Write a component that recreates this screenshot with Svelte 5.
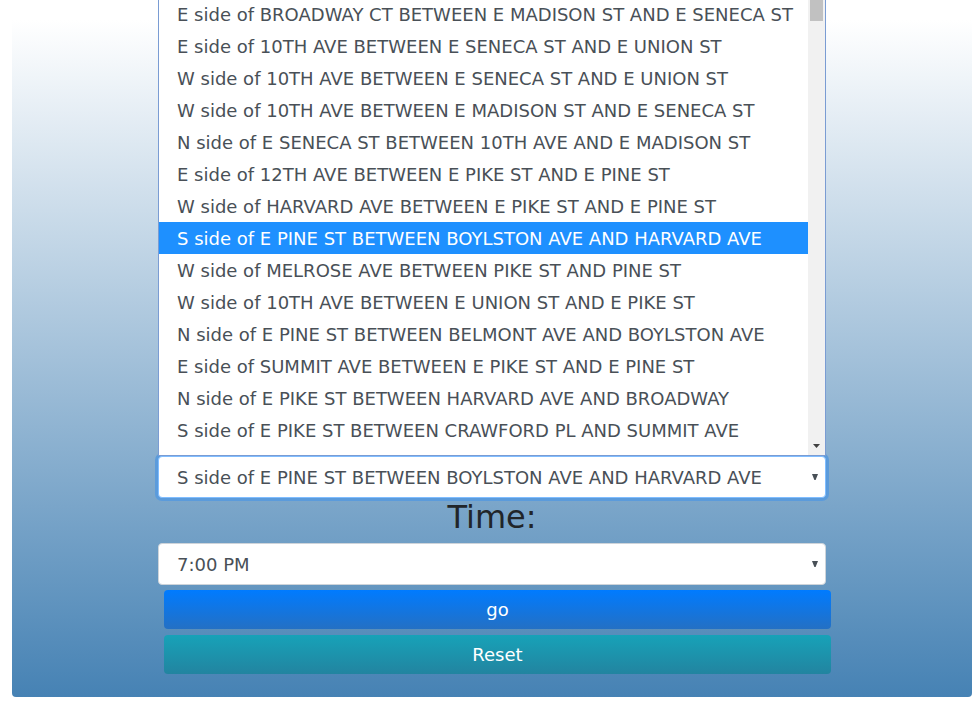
<script>
  const streets = [
    'E side of BROADWAY CT BETWEEN E MADISON ST AND E SENECA ST',
    'E side of 10TH AVE BETWEEN E SENECA ST AND E UNION ST',
    'W side of 10TH AVE BETWEEN E SENECA ST AND E UNION ST',
    'W side of 10TH AVE BETWEEN E MADISON ST AND E SENECA ST',
    'N side of E SENECA ST BETWEEN 10TH AVE AND E MADISON ST',
    'E side of 12TH AVE BETWEEN E PIKE ST AND E PINE ST',
    'W side of HARVARD AVE BETWEEN E PIKE ST AND E PINE ST',
    'S side of E PINE ST BETWEEN BOYLSTON AVE AND HARVARD AVE',
    'W side of MELROSE AVE BETWEEN PIKE ST AND PINE ST',
    'W side of 10TH AVE BETWEEN E UNION ST AND E PIKE ST',
    'N side of E PINE ST BETWEEN BELMONT AVE AND BOYLSTON AVE',
    'E side of SUMMIT AVE BETWEEN E PIKE ST AND E PINE ST',
    'N side of E PIKE ST BETWEEN HARVARD AVE AND BROADWAY',
    'S side of E PIKE ST BETWEEN CRAWFORD PL AND SUMMIT AVE'
  ];
  let street = $state(streets[7]);
  let time = $state('7:00 PM');

  function reset() {
    street = streets[7];
    time = '7:00 PM';
  }
</script>

<main>
  <form onsubmit={(e) => e.preventDefault()}>
    <div class="popup">
      <ul role="listbox" aria-label="Street">
        {#each streets as s}
          <li role="option" aria-selected={s === street} class:selected={s === street}>{s}</li>
        {/each}
      </ul>
      <div class="scrollbar" aria-hidden="true">
        <div class="thumb"></div>
        <svg width="7" height="4" viewBox="0 0 7 4"><path d="M0 0H7L3.5 4Z" fill="#404040" /></svg>
      </div>
    </div>

    <div class="field active">
      <select aria-label="Street" bind:value={street}>
        {#each streets as s}<option>{s}</option>{/each}
      </select>
      <svg width="6" height="6" viewBox="0 0 6 6"><path d="M0 0H6L3.6 6H2.4Z" fill="#495057" /></svg>
    </div>

    <label for="time">Time:</label>
    <div class="field">
      <select id="time" bind:value={time}>
        <option>6:00 PM</option>
        <option>7:00 PM</option>
        <option>8:00 PM</option>
      </select>
      <svg width="6" height="6" viewBox="0 0 6 6"><path d="M0 0H6L3.6 6H2.4Z" fill="#495057" /></svg>
    </div>

    <div class="actions">
      <button class="go" type="submit">go</button>
      <button class="reset" type="button" onclick={reset}>Reset</button>
    </div>
  </form>
</main>

<style>
  main {
    display: flow-root;
    margin: 0 8px 0 12px;
    padding: 0 146px 23px;
    border-radius: 4px;
    background: linear-gradient(#fff 20px, #4682b4);
    font-family: Verdana, 'DejaVu Sans', sans-serif;
    font-size: 18px;
    color: #495057;
  }
  form {
    display: flex;
    flex-direction: column;
  }
  .popup {
    display: flex;
    z-index: 1;
    margin-top: -2px;
    border: solid #7a9cd3;
    border-width: 0 1px 1px;
    background: #fff;
  }
  ul {
    flex: 1;
    min-width: 0;
    margin: 0;
    padding: 0 0 9px;
    list-style: none;
  }
  li {
    padding: 2px 0 0 18px;
    line-height: 30px;
    white-space: nowrap;
  }
  .selected {
    background: #1e90ff;
    color: #fff;
  }
  .scrollbar {
    display: flex;
    flex-direction: column;
    justify-content: space-between;
    align-items: center;
    box-sizing: border-box;
    width: 17px;
    padding-bottom: 7px;
    background: #f1f1f1;
  }
  .thumb {
    width: 13px;
    height: 23px;
    background: #c1c1c1;
  }
  .field {
    position: relative;
    display: flex;
  }
  .field svg {
    position: absolute;
    right: 8px;
    top: 18px;
    pointer-events: none;
  }
  select {
    appearance: none;
    box-sizing: border-box;
    width: 100%;
    height: 42px;
    padding: 0 18px;
    border: 1px solid #ced4da;
    border-radius: 4px;
    background: #fff;
    color: inherit;
    font: inherit;
    outline: none;
  }
  .active select {
    border-color: #80bdff;
    box-shadow: 0 0 0 3px #5b9bdb;
  }
  label {
    height: 45px;
    line-height: 38px;
    font-size: 32px;
    text-align: center;
    color: #212529;
  }
  .actions {
    display: flex;
    flex-direction: column;
    gap: 6px;
    margin: 5px -5px 0 6px;
  }
  button {
    height: 39px;
    padding: 0;
    border: 0;
    border-radius: 4px;
    color: #fff;
    font: inherit;
  }
  .go {
    background: linear-gradient(#007bff, #2470c4);
  }
  .reset {
    background: linear-gradient(#17a2b8, #2284a0);
  }
</style>
